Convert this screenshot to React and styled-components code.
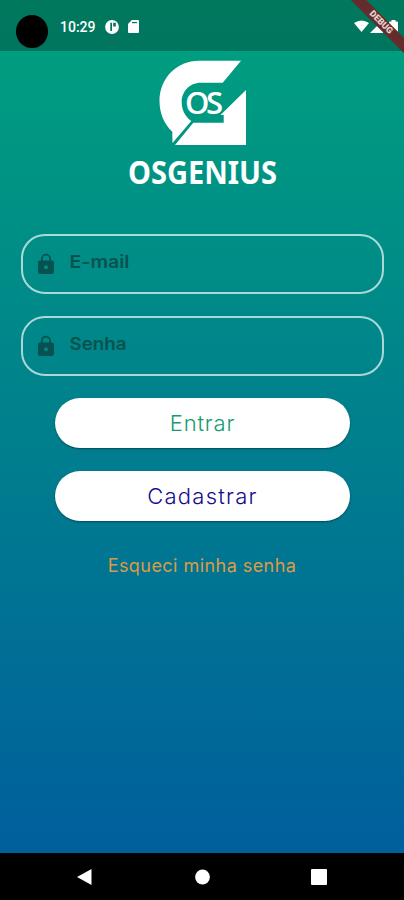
import styled, { createGlobalStyle } from "styled-components"
import React from "react";
import { useState } from "react";

const fields = [
    { name: 'email', label: 'E-mail', type: 'text', width: 60 },
    { name: 'senha', label: 'Senha', type: 'password', width: 57 },
];

const LockIcon = () => (
    <svg width="16" height="22" viewBox="0 0 16 22">
        <path
            fillRule="evenodd"
            d="M2 7.5H3V5.8a5 5 0 0 1 10 0V7.5H14a2 2 0 0 1 2 2V19a2 2 0 0 1-2 2H2a2 2 0 0 1-2-2V9.500a2 2 0 0 1 2-2ZM4.700 7.500H11.300V5.800a3.300 3.300 0 0 0-6.600 0ZM8 12.200a2 2 0 1 0 0 4a2 2 0 0 0 0-4Z"
        />
    </svg>
)

const Logo = () => (
    <LogoSvg viewBox="0 0 165 145">
        <path d="M79 10.700H121L102.700 32.700H81C69 32.700 61.700 42 61.700 52C61.700 60 65 66.500 71.300 71L52.500 93L52.300 81.700C44 74 39.500 63 39.500 51C39.500 28 57 10.700 79 10.700Z" />
        <path d="M126 40V95H55L73.300 72.700H103.700V65H100.500Z" />
        <LogoMark x="65 86" y="64.200">OS</LogoMark>
        <LogoName x="8" y="134" textLength="149" lengthAdjust="spacingAndGlyphs">OSGENIUS</LogoName>
    </LogoSvg>
)

const App = () => {
    const [values, setValues] = useState({ email: '', senha: '' });

    const handleChange = (e) => {
        setValues({ ...values, [e.target.name]: e.target.value });
    }

    return (
        <>
            <GlobalStyle />
            <Container>
                <StatusBar>
                    <Camera />
                    <Clock>10:29</Clock>
                    <StatusIcon width="14" height="14" viewBox="0 0 14 14" $left={10}>
                        <circle cx="7" cy="7" r="6.900" />
                        <path d="M5.300 2.800H7V11H5.300ZM8.200 2.800H10.800V6.500H8.200Z" fill="#00755f" />
                    </StatusIcon>
                    <StatusIcon width="11" height="13" viewBox="0 0 11 13" $left={9}>
                        <path d="M3.800 0H10Q11 0 11 1V12Q11 13 10 13H1Q0 13 0 12V4Z" />
                        <path d="M4 2H9V3.200H4Z" fill="#00755f" />
                    </StatusIcon>
                    <DebugClip><DebugBand>DEBUG</DebugBand></DebugClip>
                    <Signals width="34" height="14" viewBox="0 0 34 14">
                        <path d="M0 3Q7.500-2 15 3L7.500 12Z" />
                        <path d="M16 13L29 0V13Z" />
                    </Signals>
                    <Battery width="9" height="14" viewBox="0 0 9 14">
                        <path d="M1 1.500H2.500V0H6.500V1.500H8Q9 1.500 9 2.500V12Q9 13 8 13H1Q0 13 0 12V2.500Q0 1.500 1 1.500Z" />
                    </Battery>
                </StatusBar>
                <Content>
                    <Logo />
                    <Form onSubmit={(e) => e.preventDefault()}>
                        {
                            fields.map((field) => (
                                <Field key={field.name}>
                                    <LockIcon />
                                    <FieldBody>
                                        {!values[field.name] &&
                                            <FieldLabel width={field.width + 4} height="26">
                                                <text x="0.500" y="19" textLength={field.width} lengthAdjust="spacingAndGlyphs">{field.label}</text>
                                            </FieldLabel>
                                        }
                                        <Input
                                            name={field.name}
                                            type={field.type}
                                            aria-label={field.label}
                                            value={values[field.name]}
                                            onChange={handleChange}
                                        />
                                    </FieldBody>
                                </Field>
                            ))
                        }
                        <Button type="submit" $color="#159a72" $spacing="0.8px">Entrar</Button>
                        <Button type="button" $color="#170b8c" $spacing="1.25px">Cadastrar</Button>
                    </Form>
                    <ForgotLink>Esqueci minha senha</ForgotLink>
                </Content>
                <NavBar>
                    <svg width="16" height="18" viewBox="0 0 16 18"><path d="M0 9L14.500 1V17Z" /></svg>
                    <svg width="16" height="18" viewBox="0 0 16 18"><circle cx="8.500" cy="9" r="7.400" /></svg>
                    <svg width="16" height="18" viewBox="0 0 16 18"><rect y="1" width="16" height="16" rx="1" /></svg>
                </NavBar>
            </Container>
        </>
    )
}

const GlobalStyle = createGlobalStyle`
    body {
        margin: 0;
        font-family: Inter, "Open Sans", sans-serif;
    }

    * {
        box-sizing: border-box;
    }
`

const Container = styled.div`
    width: 100%;
    height: 900px;
    display: flex;
    flex-direction: column;
    overflow: hidden;
    background: linear-gradient(180deg, #00a17d 0px, #005f9d 853px);
`

const StatusBar = styled.div`
    position: relative;
    height: 51px;
    flex: none;
    display: flex;
    align-items: center;
    padding: 2px 6px 0 16px;
    background-color: rgba(0, 0, 0, 0.25);
`

const Camera = styled.div`
    width: 32px;
    height: 33px;
    margin-top: 10px;
    border-radius: 50%;
    background-color: #000000;
`

const Clock = styled.span`
    width: 35px;
    margin-left: 12px;
    color: #ffffff;
    font-family: Roboto, sans-serif;
    font-size: 14px;
    font-weight: 500;
    line-height: 18px;
`

const StatusIcon = styled.svg`
    margin-left: ${props => props.$left}px;
    fill: #ffffff;
`

const Signals = styled.svg`
    margin-left: auto;
    fill: #ffffff;
`

const Battery = styled.svg`
    margin-left: 1px;
    fill: #ffffff;
`

const DebugClip = styled.div`
    position: absolute;
    top: 0;
    right: 0;
    width: 60px;
    height: 60px;
    overflow: hidden;
    z-index: 1;
`

const DebugBand = styled.div`
    position: absolute;
    top: 17px;
    left: -13px;
    width: 100px;
    height: 11px;
    transform: rotate(45deg);
    background-color: #642c2a;
    color: #e5d2d0;
    font-family: Roboto, sans-serif;
    font-size: 9px;
    font-weight: 900;
    line-height: 11px;
    text-align: center;
`

const Content = styled.main`
    flex: 1;
    display: flex;
    flex-direction: column;
    align-items: center;
`

const LogoSvg = styled.svg`
    width: 165px;
    height: 145px;
    margin-top: -1px;
    overflow: visible;
    fill: #ffffff;
`

const LogoMark = styled.text`
    font-family: "Open Sans", sans-serif;
    font-size: 31px;
    font-weight: 600;
`

const LogoName = styled.text`
    font-family: "Noto Sans", sans-serif;
    font-size: 33px;
    font-weight: 700;
`

const Form = styled.form`
    width: 100%;
    padding: 39px 20px 0 21px;
    display: flex;
    flex-direction: column;
    align-items: center;
    gap: 22px;
`

const Field = styled.label`
    width: 100%;
    height: 60px;
    display: flex;
    align-items: center;
    padding: 0 15px;
    border: 2px solid rgba(255, 255, 255, 0.67);
    border-radius: 24px;

    > svg {
        flex: none;
        fill: #07524f;
    }
`

const FieldBody = styled.div`
    position: relative;
    flex: 1;
    height: 26px;
    margin-left: 15px;
    margin-top: -4px;
`

const FieldLabel = styled.svg`
    position: absolute;
    left: 0;
    top: 0;
    fill: #07524f;
    font-size: 17.5px;
    font-weight: 600;
    pointer-events: none;
`

const Input = styled.input`
    width: 100%;
    height: 100%;
    padding: 0;
    border: none;
    outline: none;
    background: transparent;
    color: #07524f;
    font: inherit;
`

const Button = styled.button`
    width: 295px;
    height: 50px;
    padding: 0;
    border: none;
    border-radius: 25px;
    background-color: #ffffff;
    box-shadow: 0 1px 2px rgba(0, 0, 0, 0.4);
    color: ${props => props.$color};
    font-family: inherit;
    font-size: 22px;
    font-weight: 350;
    letter-spacing: ${props => props.$spacing};
    line-height: 50px;

    & + & {
        margin-top: 1px;
    }
`

const ForgotLink = styled.a`
    margin-top: 33px;
    color: #dc9b45;
    font-size: 18px;
    letter-spacing: 0.45px;
    line-height: 24px;
    cursor: pointer;
`

const NavBar = styled.nav`
    height: 47px;
    flex: none;
    display: flex;
    justify-content: space-between;
    align-items: center;
    padding: 0 77px;
    background-color: #000000;

    svg {
        fill: #ffffff;
    }
`

export default App
